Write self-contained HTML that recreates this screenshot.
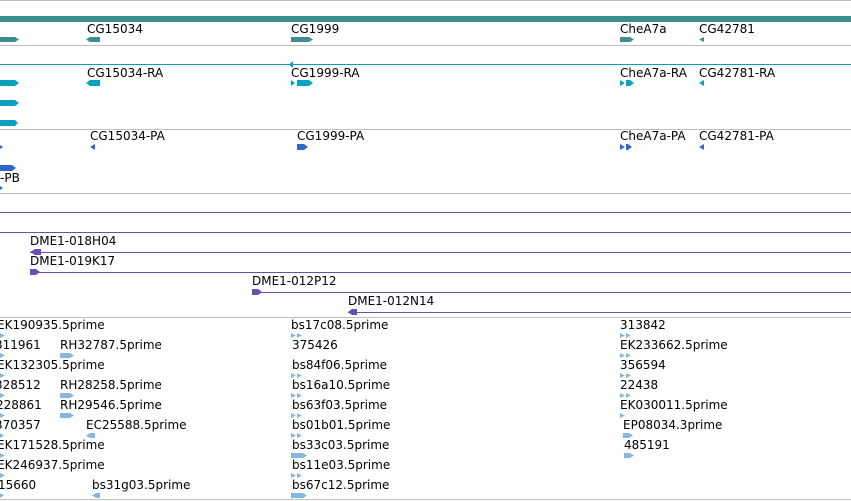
<!DOCTYPE html>
<html><head><meta charset="utf-8"><style>
body{margin:0;width:851px;height:501px;overflow:hidden;background:#fff;position:relative;font-family:"DejaVu Sans","Liberation Sans",sans-serif;font-size:12px;color:#000}
.t{position:absolute;line-height:14px;white-space:nowrap}
svg{position:absolute;left:0;top:0}
</style></head><body>
<svg width="851" height="501">
<g fill="#c0c0c0">
<rect x="0" y="0" width="851" height="1"/><rect x="0" y="45" width="851" height="1"/><rect x="0" y="129" width="851" height="1"/><rect x="0" y="193" width="851" height="1"/><rect x="0" y="317" width="851" height="1"/><rect x="0" y="499" width="851" height="1"/>
</g>
<rect x="0" y="16" width="851" height="6" fill="#3f8c8f"/>
<g fill="#3f8c8f">
<polygon points="0,37 15,37 19,39.5 15,42 0,42"/>
<polygon points="86,39.5 90,37 100,37 100,42 90,42"/>
<polygon points="291,37 309,37 313,39.5 309,42 291,42"/>
<polygon points="620,37 630,37 634,39.5 630,42 620,42"/>
<polygon points="699,39.5 704,37 704,42"/>
</g>
<rect x="0" y="64" width="851" height="1" fill="#0f9bbf"/>
<g fill="#0aa0c0">
<polygon points="289,64.5 293,61 293,68"/>
<polygon points="0,80 15,80 19,83 15,86 0,86"/>
<polygon points="0,100 15,100 19,103 15,106 0,106"/>
<polygon points="0,120 15,120 18,123 15,126 0,126"/>
<polygon points="86,83 90,80 100,80 100,86 90,86"/>
<polygon points="291,80 295,83 291,86"/><polygon points="297,80 309,80 313,83 309,86 297,86"/>
<polygon points="620,80 625,83 620,86"/><polygon points="626,80 630,80 634,83 630,86 626,86"/>
<polygon points="699,83 704,80 704,86"/>
</g>
<g fill="#3366cc">
<polygon points="0,145 3,147 0,149"/>
<polygon points="90,147 95,144 95,150"/>
<polygon points="297,144 304,144 308,147 304,150 297,150"/>
<polygon points="620,144 625,147 620,150"/><polygon points="626,144 628,144 632,147 628,150 626,150"/>
<polygon points="699,147 704,144 704,150"/>
<polygon points="0,165 12,165 16,168 12,171 0,171"/>
<polygon points="0,186 3,188 0,190"/>
</g>
<g fill="#6a4fb0">
<rect x="0" y="212" width="851" height="1"/><rect x="0" y="232" width="851" height="1"/>
<rect x="30" y="252" width="821" height="1"/><polygon points="30,252 35,249 41,249 41,255 35,255"/>
<rect x="30" y="272" width="821" height="1"/><polygon points="30,269 36,269 40,272 36,275 30,275"/>
<rect x="252" y="292" width="599" height="1"/><polygon points="252,289 258,289 262,292 258,295 252,295"/>
<rect x="348" y="312" width="503" height="1"/><polygon points="348,312 352,309 357,309 357,315 352,315"/>
</g>
<g fill="#84b8e0">
<polygon points="0,333 5,335.5 0,338"/><polygon points="291,333 296,335.5 291,338"/><polygon points="297,333 302,335.5 297,338"/><polygon points="620,333 625,335.5 620,338"/><polygon points="626,333 631,335.5 626,338"/>
<polygon points="0,353 5,355.5 0,358"/><polygon points="60,353 70,353 74,355.5 70,358 60,358"/><polygon points="620,353 625,355.5 620,358"/><polygon points="626,353 631,355.5 626,358"/>
<polygon points="0,373 5,375.5 0,378"/><polygon points="291,373 296,375.5 291,378"/><polygon points="297,373 302,375.5 297,378"/><polygon points="620,373 625,375.5 620,378"/><polygon points="626,373 631,375.5 626,378"/>
<polygon points="0,393 5,395.5 0,398"/><polygon points="60,393 70,393 74,395.5 70,398 60,398"/><polygon points="291,393 296,395.5 291,398"/><polygon points="297,393 302,395.5 297,398"/><polygon points="620,393 625,395.5 620,398"/><polygon points="626,393 631,395.5 626,398"/>
<polygon points="0,413 5,415.5 0,418"/><polygon points="60,413 70,413 74,415.5 70,418 60,418"/><polygon points="291,413 296,415.5 291,418"/><polygon points="297,413 302,415.5 297,418"/><polygon points="620,413 625,415.5 620,418"/>
<polygon points="0,433 4,435.5 0,438"/><polygon points="86,435.5 90,433 95,433 95,438 90,438"/><polygon points="291,433 296,435.5 291,438"/><polygon points="297,433 302,435.5 297,438"/><polygon points="623,433 629,433 633,435.5 629,438 623,438"/>
<polygon points="0,453 5,455.5 0,458"/><polygon points="291,453 303,453 307,455.5 303,458 291,458"/><polygon points="624,453 630,453 634,455.5 630,458 624,458"/>
<polygon points="0,473 5,475.5 0,478"/><polygon points="291,473 296,475.5 291,478"/><polygon points="297,473 302,475.5 297,478"/>
<polygon points="0,493 4,495.5 0,498"/><polygon points="92,495.5 96,493 100,493 100,498 96,498"/><polygon points="291,493 303,493 307,495.5 303,498 291,498"/>
</g>
</svg>
<div class="t" style="left:87px;top:22px">CG15034</div>
<div class="t" style="left:291px;top:22px">CG1999</div>
<div class="t" style="left:620px;top:22px">CheA7a</div>
<div class="t" style="left:699px;top:22px">CG42781</div>
<div class="t" style="left:87px;top:66px">CG15034-RA</div>
<div class="t" style="left:291px;top:66px">CG1999-RA</div>
<div class="t" style="left:620px;top:66px">CheA7a-RA</div>
<div class="t" style="left:699px;top:66px">CG42781-RA</div>
<div class="t" style="left:90px;top:129px">CG15034-PA</div>
<div class="t" style="left:297px;top:129px">CG1999-PA</div>
<div class="t" style="left:620px;top:129px">CheA7a-PA</div>
<div class="t" style="left:699px;top:129px">CG42781-PA</div>
<div class="t" style="left:0px;top:171px">-PB</div>
<div class="t" style="left:30px;top:234px">DME1-018H04</div>
<div class="t" style="left:30px;top:254px">DME1-019K17</div>
<div class="t" style="left:252px;top:274px">DME1-012P12</div>
<div class="t" style="left:348px;top:294px">DME1-012N14</div>
<div class="t" style="left:-3px;top:318px">EK190935.5prime</div>
<div class="t" style="left:-5px;top:338px">311961</div>
<div class="t" style="left:-3px;top:358px">EK132305.5prime</div>
<div class="t" style="left:-5px;top:378px">328512</div>
<div class="t" style="left:-4px;top:398px">228861</div>
<div class="t" style="left:-5px;top:418px">370357</div>
<div class="t" style="left:-3px;top:438px">EK171528.5prime</div>
<div class="t" style="left:-3px;top:458px">EK246937.5prime</div>
<div class="t" style="left:-2px;top:478px">15660</div>
<div class="t" style="left:60px;top:338px">RH32787.5prime</div>
<div class="t" style="left:60px;top:378px">RH28258.5prime</div>
<div class="t" style="left:60px;top:398px">RH29546.5prime</div>
<div class="t" style="left:86px;top:418px">EC25588.5prime</div>
<div class="t" style="left:92px;top:478px">bs31g03.5prime</div>
<div class="t" style="left:291px;top:318px">bs17c08.5prime</div>
<div class="t" style="left:292px;top:338px">375426</div>
<div class="t" style="left:292px;top:358px">bs84f06.5prime</div>
<div class="t" style="left:292px;top:378px">bs16a10.5prime</div>
<div class="t" style="left:292px;top:398px">bs63f03.5prime</div>
<div class="t" style="left:292px;top:418px">bs01b01.5prime</div>
<div class="t" style="left:292px;top:438px">bs33c03.5prime</div>
<div class="t" style="left:292px;top:458px">bs11e03.5prime</div>
<div class="t" style="left:292px;top:478px">bs67c12.5prime</div>
<div class="t" style="left:620px;top:318px">313842</div>
<div class="t" style="left:620px;top:338px">EK233662.5prime</div>
<div class="t" style="left:620px;top:358px">356594</div>
<div class="t" style="left:620px;top:378px">22438</div>
<div class="t" style="left:620px;top:398px">EK030011.5prime</div>
<div class="t" style="left:623px;top:418px">EP08034.3prime</div>
<div class="t" style="left:624px;top:438px">485191</div>
</body></html>
